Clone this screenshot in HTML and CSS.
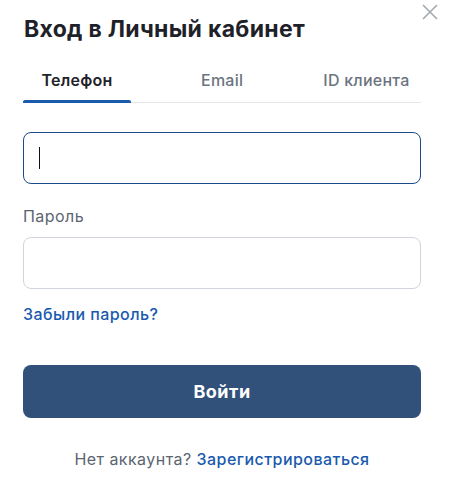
FILE: index.html
```html
<!DOCTYPE html>
<html lang="ru">
<head>
<meta charset="utf-8">
<link rel="stylesheet" href="styles.css">
</head>
<body>
<div class="modal">
  <button class="close" aria-label="Закрыть">
    <svg width="16" height="16" viewBox="0 0 16 16"><path d="M1 1L15 15M15 1L1 15" stroke="#a3a9b0" stroke-width="1.6" fill="none"/></svg>
  </button>
  <h1 class="title">Вход в Личный кабинет</h1>
  <div class="tabs">
    <div class="tab active">Телефон</div>
    <div class="tab tab-email">Email</div>
    <div class="tab tab-id">ID клиента</div>
  </div>
  <div class="field focused"><span class="caret"></span></div>
  <div class="label">Пароль</div>
  <div class="field"></div>
  <a class="link forgot" href="#">Забыли пароль?</a>
  <button class="submit">Войти</button>
  <p class="signup">Нет аккаунта? <a class="link" href="#">Зарегистрироваться</a></p>
</div>
</body>
</html>
```
FILE: styles.css
```css
* { box-sizing: border-box; }
html, body { margin: 0; background: #fff; }
body { font-family: Inter, "Noto Sans", sans-serif; color: #1f2329; }
.modal {
  position: relative;
  display: flex;
  flex-direction: column;
  padding: 14px 36px 0 23px;
}
.close {
  position: absolute;
  top: 4px;
  right: 19px;
  padding: 0;
  border: 0;
  background: none;
  width: 16px;
  height: 16px;
}
.close svg { display: block; }
.title {
  margin: 0 0 0 1px;
  font-size: 23px;
  line-height: 30px;
  font-weight: 700;
  letter-spacing: 0.3px;
  color: #1e2228;
}
.tabs {
  display: flex;
  margin-top: 25px;
  border-bottom: 1px solid #e3e6ea;
}
.tab {
  position: relative;
  font-size: 16px;
  line-height: 22px;
  letter-spacing: 0.25px;
  padding: 0 0 11px;
  color: #6b7480;
  font-weight: 500;
  text-align: center;
}
.tab.active {
  width: 108px;
  color: #1f2329;
  font-weight: 600;
}
.tab.active::after {
  content: "";
  position: absolute;
  left: 0;
  right: 0;
  bottom: -1px;
  height: 3px;
  background: #1a5aad;
  border-radius: 2px 2px 0 0;
}
.tab-email { margin-left: 70px; }
.tab-id { margin-left: 80px; }
.field {
  height: 52px;
  border: 1px solid #cfd4de;
  border-radius: 8px;
  margin-top: 29px;
  display: flex;
  align-items: center;
  padding-left: 15px;
}
.field.focused { border-color: #1d4b8a; }
.caret {
  width: 1px;
  height: 22px;
  background: #111;
}
.label {
  margin-top: 22px;
  font-size: 16px;
  line-height: 20px;
  letter-spacing: 0.45px;
  color: #5c6470;
}
.label + .field { margin-top: 11px; }
.link {
  color: #1a5aad;
  text-decoration: none;
  font-size: 16px;
  line-height: 20px;
  letter-spacing: 0.45px;
  font-weight: 500;
}
.forgot {
  margin-top: 15px;
  align-self: flex-start;
}
.submit {
  margin-top: 41px;
  height: 53px;
  border: 0;
  border-radius: 8px;
  background: #31517a;
  color: #fff;
  font-family: inherit;
  font-size: 18px;
  letter-spacing: 0.5px;
  font-weight: 700;
}
.signup {
  margin: 31px 0 0;
  text-align: center;
  font-size: 16px;
  line-height: 20px;
  letter-spacing: 0.45px;
  color: #5c6470;
}
.signup .link { font-weight: 500; }
```
